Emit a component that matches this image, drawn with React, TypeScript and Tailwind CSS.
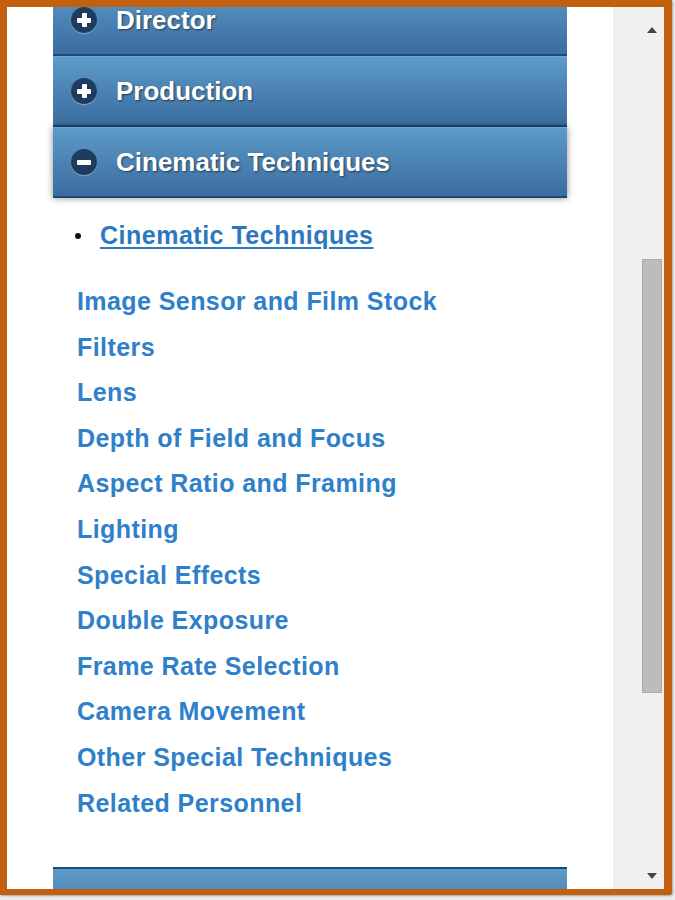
import React from "react";

const links = [
  "Image Sensor and Film Stock",
  "Filters",
  "Lens",
  "Depth of Field and Focus",
  "Aspect Ratio and Framing",
  "Lighting",
  "Special Effects",
  "Double Exposure",
  "Frame Rate Selection",
  "Camera Movement",
  "Other Special Techniques",
  "Related Personnel",
];

function ToggleIcon({ open }: { open: boolean }) {
  return (
    <span className="relative w-[26px] h-[26px] rounded-full bg-[#1f3c5e] shadow-[0_1px_1px_rgba(255,255,255,0.35)] flex items-center justify-center shrink-0">
      <span className="absolute w-[14px] h-[5px] rounded-[1px] bg-white" />
      {!open && <span className="absolute w-[5px] h-[14px] rounded-[1px] bg-white" />}
    </span>
  );
}

function Header({ title, open }: { title: string; open?: boolean }) {
  return (
    <div
      className={`h-[71px] flex items-center gap-[19px] pl-[18px] border-t border-t-[#6aa6d2] border-b-2 border-b-[#1c4a79] bg-linear-to-b from-[#5c9bc8] to-[#3b6c9f] ${
        open ? "relative shadow-[0_0_7px_rgba(0,0,0,0.45)]" : ""
      }`}
    >
      <ToggleIcon open={!!open} />
      <span className="text-white font-bold text-[26px] [text-shadow:1px_1px_2px_rgba(0,0,0,0.55)]">{title}</span>
    </div>
  );
}

export default function App() {
  return (
    <div className="w-[675px] h-[900px] bg-[#ececec] overflow-hidden font-['Liberation_Sans',Arial,sans-serif]">
      <div className="w-[672px] h-[895px] border-[#c3600f] border-l-[7px] border-t-[7px] border-r-[8px] border-b-[6px] rounded-br-[3px] flex bg-white shadow-[1px_1px_2px_rgba(0,0,0,0.3)]">
        {/* page content, scrolled part way */}
        <div className="flex-1 overflow-hidden">
          <div className="-mt-[22px] ml-[46px] w-[514px]">
            <Header title="Director" />
            <Header title="Production" />
            <Header title="Cinematic Techniques" open />

            <div className="mt-[15px] h-[46px] flex items-center pl-[22px]">
              <span className="w-[6px] h-[6px] rounded-full bg-[#111] mr-[19px]" />
              <a className="text-[25px] font-bold tracking-[0.5px] text-[#2a78c0] underline underline-offset-[3px] decoration-[2px]">
                Cinematic Techniques
              </a>
            </div>

            <div className="mt-[20px] pl-[24px] flex flex-col">
              {links.map((l) => (
                <a key={l} className="h-[45.6px] flex items-center text-[25px] font-bold tracking-[0.42px] text-[#2f80ca]">
                  {l}
                </a>
              ))}
            </div>

            <div className="mt-[41px] h-[71px] border-t-2 border-t-[#1c4a79] bg-linear-to-b from-[#5c9bc8] to-[#3b6c9f]" />
          </div>
        </div>

        {/* scrollbar */}
        <div className="w-[51px] bg-[#f0f0f0] flex justify-end pr-[2px]">
          <div className="w-[21px] flex flex-col items-center">
            <div className="h-[26px] flex items-end">
              <span className="w-0 h-0 border-l-[5px] border-r-[5px] border-b-[6px] border-l-transparent border-r-transparent border-b-[#444]" />
            </div>
            <div className="mt-[226px] w-[20px] h-[434px] bg-[#bcbcbc] border border-[#a9a9a9]" />
            <div className="mt-auto mb-[10px] h-[6px]">
              <span className="block w-0 h-0 border-l-[5px] border-r-[5px] border-t-[6px] border-l-transparent border-r-transparent border-t-[#444]" />
            </div>
          </div>
        </div>
      </div>
    </div>
  );
}
